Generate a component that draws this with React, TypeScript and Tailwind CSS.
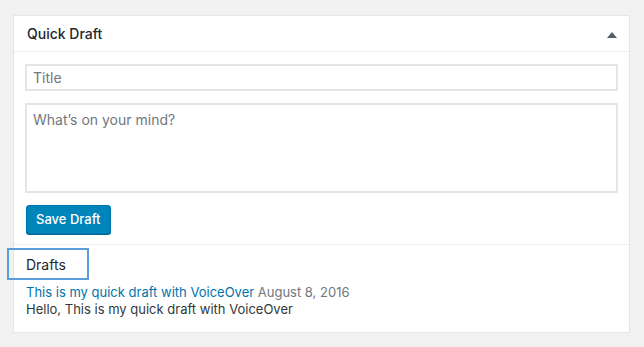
import React from "react";

export default function App() {
  return (
    <div className="w-[644px] h-[347px] bg-[#f1f1f1] pl-[13px] pt-[15px]" style={{ fontFamily: 'Inter, "Liberation Sans", Arial, sans-serif' }}>
      <div className="w-[617px] h-[318px] bg-white border border-[#e5e5e5] flex flex-col">
        <div className="h-[36px] border-b border-[#eeeeee] flex items-center justify-between pl-[13px] pr-[12px]">
          <span className="text-[14px] font-medium text-[#23282d]">Quick Draft</span>
          <svg width="10" height="8" viewBox="0 0 10 8" className="mt-[2px]"><path d="M0 7 L5 1 L10 7 Z" fill="#555d66" /></svg>
        </div>
        <div className="px-[11px] pt-[12px] pb-[10px] flex flex-col border-b border-[#eeeeee]">
          <div className="h-[27px] border-2 border-[#e5e5e5] flex items-center pl-[6px] text-[14px] text-[#72777c]">Title</div>
          <div className="mt-[12px] h-[90px] border-2 border-[#e5e5e5] pl-[6px] pt-[4px] text-[14px] text-[#72777c]">What’s on your mind?</div>
          <div className="mt-[12px]">
            <button className="h-[29px] px-[9px] ml-px rounded-[3px] bg-[#0085ba] border border-[#0073aa] text-white text-[13px] font-medium shadow-[0_1px_0_#006799]">Save Draft</button>
          </div>
        </div>
        <div className="flex flex-col">
          <div className="mt-[3px] -ml-[7px] w-[82px] h-[32px] border-2 border-[#5b9dd9] flex items-center pl-[17px] text-[14px] text-[#23282d]">Drafts</div>
          <div className="mt-[4px] pl-[12px] text-[13px] leading-[17px]">
            <span className="text-[#0073aa]">This is my quick draft with VoiceOver</span>{" "}
            <span className="text-[#72777c]">August 8, 2016</span>
          </div>
          <div className="pl-[12px] text-[13px] leading-[17px] text-[#32373c]">Hello, This is my quick draft with VoiceOver</div>
        </div>
      </div>
    </div>
  );
}
